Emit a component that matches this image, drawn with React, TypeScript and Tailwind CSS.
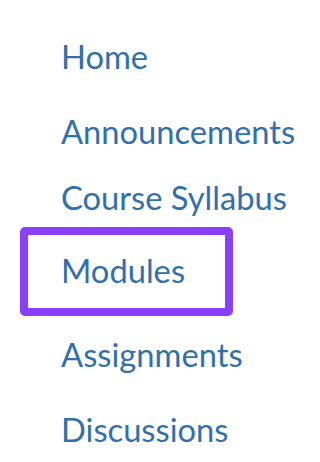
import React from "react";

export default function App() {
  return (
    <div
      className="w-[315px] h-[462px] bg-white overflow-hidden text-[32.7px] leading-[40px] text-[#3170ac]"
      style={{ fontFamily: "Lato, 'Noto Sans', sans-serif" }}
    >
      <nav className="flex flex-col pt-[37px]">
        <a className="block pl-[61px]">Home</a>
        <a className="block pl-[61px] mt-[35px]">Announcements</a>
        <a className="block pl-[61px] mt-[26px]">Course Syllabus</a>
        <div className="mt-[9px] ml-[20px] w-[213px] h-[89px] border-[8px] border-[#8a3ffc] rounded-[5px] pl-[33px] pt-[16px]">
          <a className="block">Modules</a>
        </div>
        <a className="block pl-[61px] mt-[19px]">Assignments</a>
        <a className="block pl-[61px] mt-[35px]">Discussions</a>
      </nav>
    </div>
  );
}
